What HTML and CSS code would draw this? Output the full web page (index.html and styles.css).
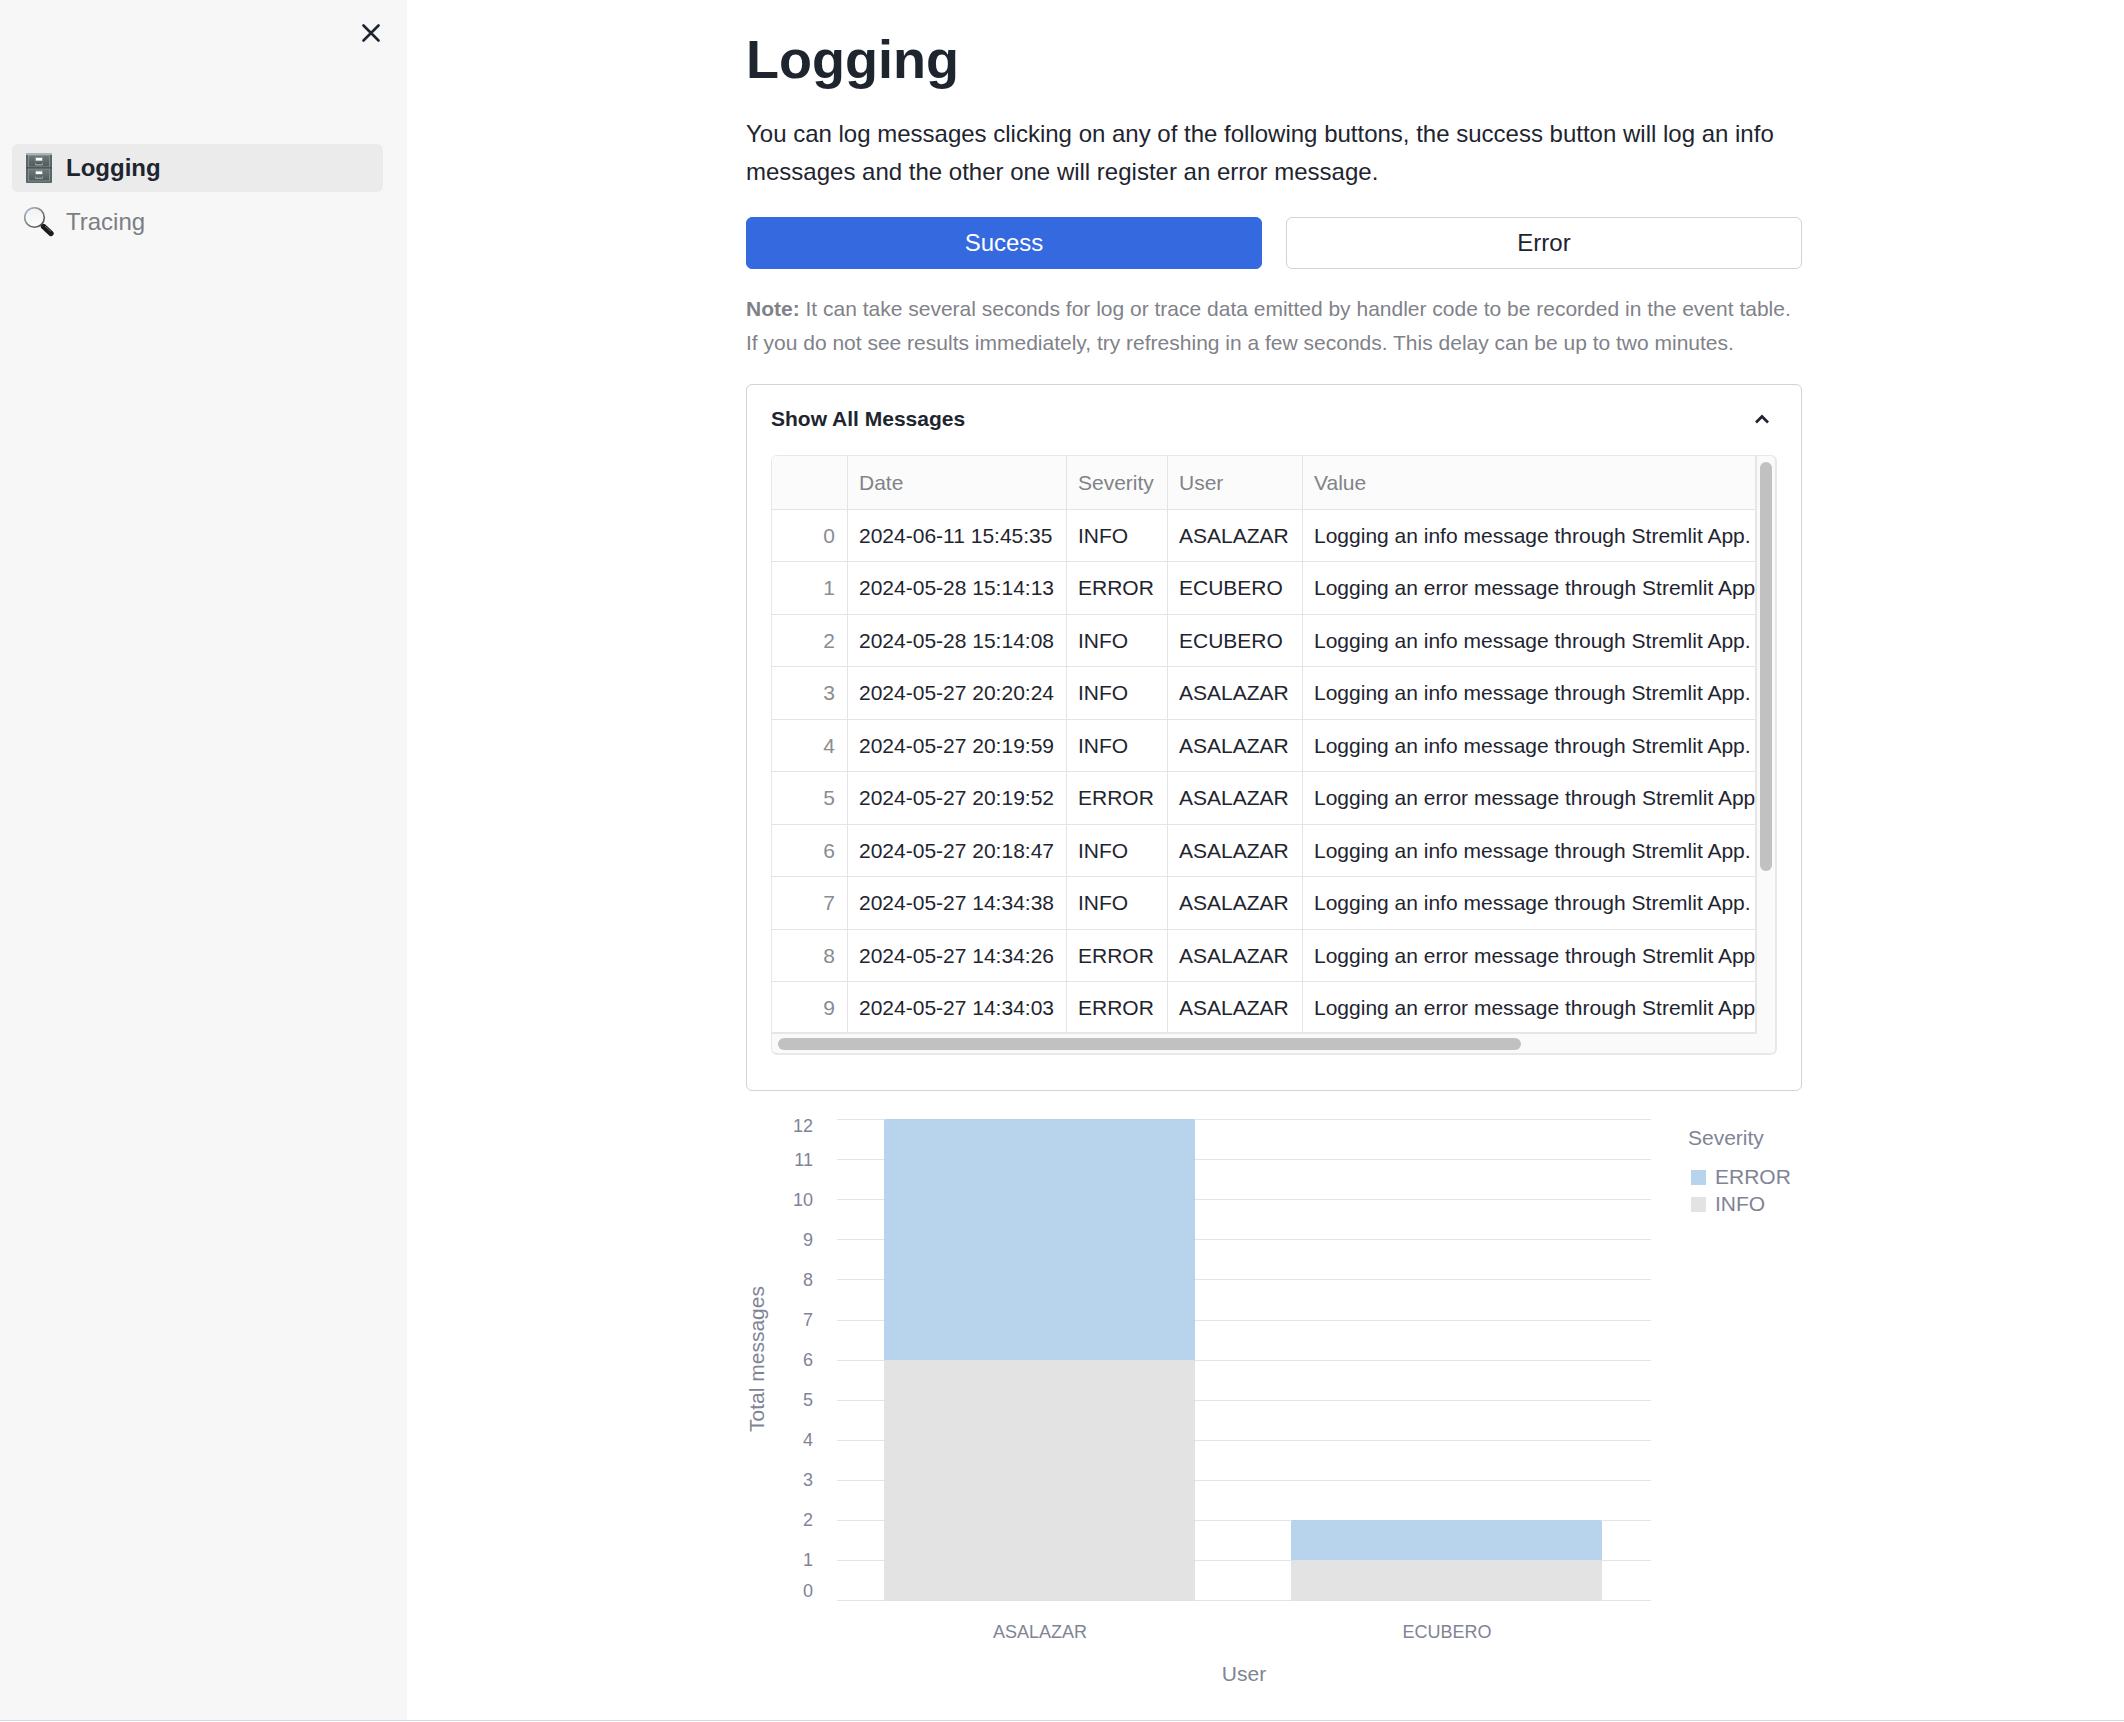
FILE: index.html
```html
<!DOCTYPE html>
<html lang="en">
<head>
<meta charset="utf-8">
<meta name="viewport" content="width=device-width, initial-scale=1">
<title>Logging</title>
<link rel="stylesheet" href="styles.css">
</head>
<body>
<div class="app">
  <aside class="sidebar">
    <button class="close" type="button" aria-label="Close sidebar">
      <svg width="18" height="18" viewBox="0 0 18 18" aria-hidden="true"><path d="M1.5 1.5 16.5 16.5M16.5 1.5 1.5 16.5" fill="none" stroke="#1e252f" stroke-width="2.6" stroke-linecap="round"/></svg>
    </button>
    <nav class="nav">
      <a class="nav-link active" href="#logging">
        <svg class="nav-icon" width="32" height="32" viewBox="0 0 32 32" aria-hidden="true">
          <defs>
            <linearGradient id="steel" x1="0" y1="0" x2="0" y2="1"><stop offset="0" stop-color="#6d7878"/><stop offset="1" stop-color="#4f5a5b"/></linearGradient>
          </defs>
          <rect x="3" y="1" width="26" height="30" rx="1" fill="#59656a"/>
          <rect x="3" y="1" width="26" height="2" fill="#a9b3b8"/>
          <rect x="5.500" y="3.500" width="21" height="11.500" fill="url(#steel)" stroke="#8d989a" stroke-width=".8"/>
          <rect x="5.500" y="17" width="21" height="12" fill="url(#steel)" stroke="#8d989a" stroke-width=".8"/>
          <path d="M3 15.800h26" stroke="#3f494d" stroke-width="1"/>
          <path d="M12 5h8v4h-8zM12 18.500h8v4h-8z" fill="#8b9597"/>
          <path d="M13 6h6v2.500h-6zM13 19.500h6v2.500h-6z" fill="#fff"/>
          <path d="M12 11v1.200q0 1.300 1.300 1.300h5.400q1.300 0 1.300-1.300V11zM12 24.500v1.200q0 1.300 1.300 1.300h5.400q1.300 0 1.300-1.300v-1.200z" fill="#939d9f"/>
          <path d="M13 11h6v1h-6zM13 24.500h6v1h-6z" fill="#4b5557"/>
        </svg>
        <span>Logging</span>
      </a>
      <a class="nav-link" href="#tracing">
        <svg class="nav-icon" width="32" height="32" viewBox="0 0 32 32" aria-hidden="true">
          <defs>
            <linearGradient id="rim" x1="0" y1="0" x2="1" y2="1"><stop offset="0" stop-color="#a9bcd8"/><stop offset=".5" stop-color="#7f8286"/><stop offset="1" stop-color="#3e4042"/></linearGradient>
            <linearGradient id="glass" x1="0" y1="0" x2="0" y2="1"><stop offset="0" stop-color="#f1f1f2"/><stop offset="1" stop-color="#fdfdfd"/></linearGradient>
          </defs>
          <path d="m18 18 3.500 3.500" stroke="#84888b" stroke-width="3"/>
          <path d="m20.500 20.500 7.500 7" stroke="#191b1c" stroke-width="5.400" stroke-linecap="round"/>
          <path d="m22 20 6 5.500" stroke="#6a6e70" stroke-width="1"/>
          <circle cx="11.500" cy="11.500" r="9.800" fill="url(#glass)" stroke="url(#rim)" stroke-width="1.600"/>
        </svg>
        <span>Tracing</span>
      </a>
    </nav>
  </aside>

  <main class="main">
    <div class="content">
      <h1>Logging</h1>
      <p class="intro">You can log messages clicking on any of the following buttons, the success button will log an info messages and the other one will register an error message.</p>
      <div class="actions">
        <button class="btn btn-primary" type="button">Sucess</button>
        <button class="btn" type="button">Error</button>
      </div>
      <p class="note"><strong>Note:</strong> It can take several seconds for log or trace data emitted by handler code to be recorded in the event table. If you do not see results immediately, try refreshing in a few seconds. This delay can be up to two minutes.</p>

      <details class="expander" open>
        <summary>
          <span>Show All Messages</span>
          <svg width="16" height="12" viewBox="0 0 16 12" aria-hidden="true"><path d="M2 9.500 8 3.500 14 9.500" fill="none" stroke="#1e252f" stroke-width="2.700"/></svg>
        </summary>
        <div class="frame">
          <div class="viewport">
            <table>
              <colgroup><col class="c-index"><col class="c-date"><col class="c-severity"><col class="c-user"><col class="c-value"></colgroup>
              <thead>
                <tr><th></th><th scope="col">Date</th><th scope="col">Severity</th><th scope="col">User</th><th scope="col">Value</th></tr>
              </thead>
              <tbody>
                <tr><td>0</td><td>2024-06-11 15:45:35</td><td>INFO</td><td>ASALAZAR</td><td>Logging an info message through Stremlit App.</td></tr>
                <tr><td>1</td><td>2024-05-28 15:14:13</td><td>ERROR</td><td>ECUBERO</td><td>Logging an error message through Stremlit App.</td></tr>
                <tr><td>2</td><td>2024-05-28 15:14:08</td><td>INFO</td><td>ECUBERO</td><td>Logging an info message through Stremlit App.</td></tr>
                <tr><td>3</td><td>2024-05-27 20:20:24</td><td>INFO</td><td>ASALAZAR</td><td>Logging an info message through Stremlit App.</td></tr>
                <tr><td>4</td><td>2024-05-27 20:19:59</td><td>INFO</td><td>ASALAZAR</td><td>Logging an info message through Stremlit App.</td></tr>
                <tr><td>5</td><td>2024-05-27 20:19:52</td><td>ERROR</td><td>ASALAZAR</td><td>Logging an error message through Stremlit App.</td></tr>
                <tr><td>6</td><td>2024-05-27 20:18:47</td><td>INFO</td><td>ASALAZAR</td><td>Logging an info message through Stremlit App.</td></tr>
                <tr><td>7</td><td>2024-05-27 14:34:38</td><td>INFO</td><td>ASALAZAR</td><td>Logging an info message through Stremlit App.</td></tr>
                <tr><td>8</td><td>2024-05-27 14:34:26</td><td>ERROR</td><td>ASALAZAR</td><td>Logging an error message through Stremlit App.</td></tr>
                <tr><td>9</td><td>2024-05-27 14:34:03</td><td>ERROR</td><td>ASALAZAR</td><td>Logging an error message through Stremlit App.</td></tr>
              </tbody>
            </table>
          </div>
          <div class="track track-y"><div class="thumb"></div></div>
          <div class="track track-x"><div class="thumb"></div></div>
        </div>
      </details>

      <svg class="chart" viewBox="0 0 1056 580" role="img" aria-label="Total messages by user and severity">
        <g class="grid">
          <path d="M91 4.500H905M91 44.500H905M91 84.500H905M91 124.500H905M91 164.500H905M91 205.500H905M91 245.500H905M91 285.500H905M91 325.500H905M91 365.500H905M91 405.500H905M91 445.500H905M91 485.500H905"/>
        </g>
        <g class="bars">
          <path class="error" d="M138 245V6q0-2 2-2h307q2 0 2 2v239z"/>
          <path class="info" d="M138 245h311v241H138z"/>
          <path class="error" d="M545 445v-38q0-2 2-2h307q2 0 2 2v38z"/>
          <path class="info" d="M545 445h311v41H545z"/>
        </g>
        <g class="ticks-y">
          <text x="67" y="17">12</text>
          <text x="67" y="51">11</text>
          <text x="67" y="91">10</text>
          <text x="67" y="131">9</text>
          <text x="67" y="171">8</text>
          <text x="67" y="211">7</text>
          <text x="67" y="251">6</text>
          <text x="67" y="291">5</text>
          <text x="67" y="331">4</text>
          <text x="67" y="371">3</text>
          <text x="67" y="411">2</text>
          <text x="67" y="451">1</text>
          <text x="67" y="482">0</text>
        </g>
        <g class="ticks-x">
          <text x="294" y="523">ASALAZAR</text>
          <text x="701" y="523">ECUBERO</text>
        </g>
        <g class="titles">
          <text x="498" y="566">User</text>
          <text transform="translate(18 244) rotate(-90)">Total messages</text>
        </g>
        <g class="legend">
          <text x="942" y="30">Severity</text>
          <path class="error" d="M945 55h15v15h-15z"/>
          <text x="969" y="69">ERROR</text>
          <path class="info" d="M945 82h15v15h-15z"/>
          <text x="969" y="96">INFO</text>
        </g>
      </svg>
    </div>
  </main>
</div>
</body>
</html>
```
FILE: styles.css
```css
*,
*::before,
*::after {
  box-sizing: border-box;
}

body {
  margin: 0;
  background: #fff;
  color: #1e252f;
  font-family: "Liberation Sans", Arial, Helvetica, sans-serif;
  font-size: 24px;
}

.app {
  display: grid;
  grid-template-columns: 407px minmax(0, 1fr);
  min-height: calc(100vh - 1px);
  border-bottom: 1px solid #d4d8e2;
}

/* Sidebar */
.sidebar {
  background: #f7f7f7;
  padding: 24px 24px 24px 12px;
}

.close {
  display: block;
  margin: 0 3px 0 auto;
  padding: 0;
  border: 0;
  background: none;
  line-height: 0;
}

.nav {
  display: flex;
  flex-direction: column;
  gap: 6px;
  padding-top: 102px;
}

.nav-link {
  display: flex;
  align-items: center;
  gap: 11px;
  height: 48px;
  padding: 0 11px;
  border-radius: 6px;
  color: #7b7e85;
  text-decoration: none;
}

.nav-link.active {
  background: #ebebeb;
  color: #1e252f;
  font-weight: bold;
}

/* Main column */
.main {
  padding: 27px 0 20px 17px;
}

.content {
  display: flex;
  flex-direction: column;
  gap: 24px;
  max-width: 1056px;
  margin: 0 auto;
}

h1 {
  margin: 0;
  font-size: 54px;
  line-height: 64px;
}

p {
  margin: 0;
}

.intro {
  padding-bottom: 2px;
  line-height: 38px;
}

.actions {
  display: grid;
  grid-template-columns: 1fr 1fr;
  gap: 24px;
}

.btn {
  height: 52px;
  padding: 0;
  border: 1px solid #d2d3d5;
  border-radius: 6px;
  background: #fff;
  color: #1e252f;
  font: inherit;
}

.btn-primary {
  border-color: #3569df;
  background: #3569df;
  color: #fff;
}

.note {
  margin-top: -1px;
  color: #7f8289;
  font-size: 21px;
  line-height: 34px;
}

/* Expander */
.expander {
  padding: 0 24px 35px;
  border: 1px solid #d2d3d5;
  border-radius: 6px;
  font-size: 21px;
}

summary {
  display: flex;
  align-items: center;
  justify-content: space-between;
  height: 70px;
  padding: 0 7px 2px 0;
  font-weight: bold;
  list-style: none;
}

/* Data frame */
.frame {
  display: grid;
  grid-template-columns: minmax(0, 1fr) 18px;
  overflow: hidden;
  border: 1px solid #e8e8e9;
  border-right-width: 2px;
  border-bottom-width: 2px;
  border-radius: 6px;
  background: #fafafa;
}

.viewport {
  height: 578px;
  overflow: hidden;
  border-right: 2px solid #e6e6e7;
  border-bottom: 2px solid #e6e6e7;
  background: #fff;
}

table {
  width: 1300px;
  border-spacing: 0;
  table-layout: fixed;
}

.c-index {
  width: 76px;
}

.c-date {
  width: 219px;
}

.c-severity {
  width: 101px;
}

.c-user {
  width: 135px;
}

th,
td {
  padding: 0 12px 0 11px;
  border-right: 1px solid #e4e4e6;
  border-bottom: 1px solid #e4e4e6;
  text-align: left;
  white-space: nowrap;
}

th {
  height: 54px;
  background: #fbfbfb;
  color: #808388;
  font-weight: normal;
}

/* Rows average 52.5 pixels */
td {
  height: 52px;
}

tr:nth-child(even) td {
  height: 53px;
}

td:first-child {
  color: #8a8c90;
  text-align: right;
}

.track-y {
  padding: 6px 3px;
}

.track-y .thumb {
  width: 12px;
  height: 409px;
}

.track-x {
  height: 19px;
  padding: 4px 2px 4px 6px;
}

.track-x .thumb {
  width: 76%;
  height: 12px;
}

.thumb {
  border-radius: 6px;
  background: #c1c1c1;
}

/* Chart */
.chart {
  display: block;
  width: 100%;
  fill: #808495;
  font-size: 21px;
}

.grid {
  fill: none;
  stroke: #e2e4ed;
  stroke-width: 1px;
}

.error {
  fill: #b8d4ec;
}

.info {
  fill: #e3e3e3;
}

.bars {
  fill-opacity: 0.9;
}

.bars .error {
  fill: #b0cfea;
}

.bars .info {
  fill: #e0e0e0;
}

.ticks-y {
  font-size: 18px;
  text-anchor: end;
}

.ticks-x {
  font-size: 18px;
  text-anchor: middle;
}

.titles {
  text-anchor: middle;
}
```
